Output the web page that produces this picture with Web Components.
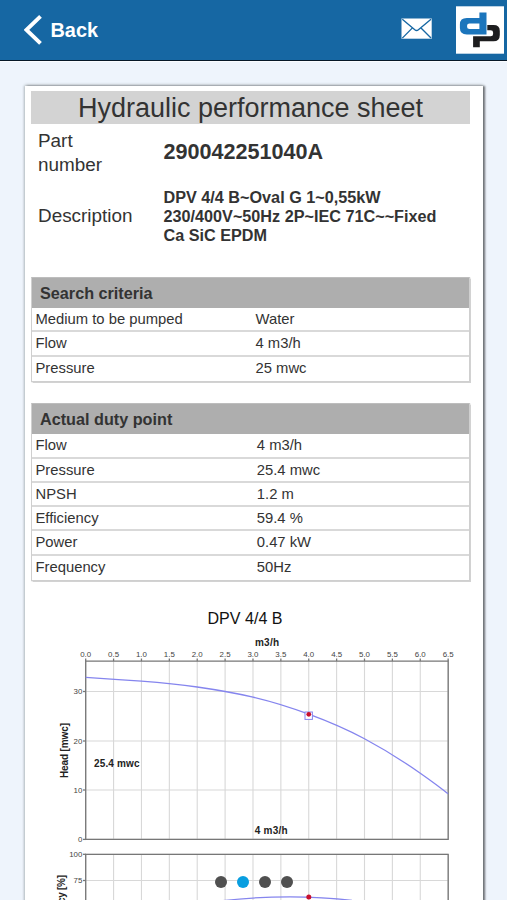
<!DOCTYPE html>
<html lang="en">
<head>
<meta charset="utf-8">
<title>Hydraulic performance sheet</title>
<style>
    html, body { margin: 0; height: 100%; overflow: hidden; }
    body { background: #eef4fc; color: #333; font-family: "Liberation Sans", Arial, sans-serif; }
</style>
</head>
<body>
<app-screen>
    <nav-bar slot="bar">Back</nav-bar>
    <pump-sheet>
        <span slot="title">Hydraulic performance sheet</span>
        <info-row label="Part number" size="21.6px" tall="59px" lift="3px">290042251040A</info-row>
        <info-row label="Description" size="16.22px" tall="67px" lift="0">DPV 4/4 B~Oval G 1~0,55kW<br>230/400V~50Hz 2P~IEC 71C~~Fixed<br>Ca SiC EPDM</info-row>
        <data-table caption="Search criteria" style="--value-col: 220px; margin-top: 27.5px">
            <data-row label="Medium to be pumped">Water</data-row>
            <data-row label="Flow">4 m3/h</data-row>
            <data-row label="Pressure">25 mwc</data-row>
        </data-table>
        <data-table caption="Actual duty point" style="--value-col: 221.3px; margin-top: 21.5px">
            <data-row label="Flow">4 m3/h</data-row>
            <data-row label="Pressure">25.4 mwc</data-row>
            <data-row label="NPSH">1.2 m</data-row>
            <data-row label="Efficiency">59.4 %</data-row>
            <data-row label="Power">0.47 kW</data-row>
            <data-row label="Frequency">50Hz</data-row>
        </data-table>
        <pump-chart></pump-chart>
    </pump-sheet>
    <page-dots slot="dots" count="4" active="1"></page-dots>
</app-screen>

<script>
    function attach(el, html){
        let template = document.createElement('template');
        template.innerHTML = html;
        el.attachShadow({mode: 'open'});
        el.shadowRoot.appendChild(template.content.cloneNode(true));
        return el.shadowRoot;
    }

    class AppScreen extends HTMLElement{
        constructor(){
            super();
            attach(this, `
            <style>
                :host { display: flex; flex-direction: column; height: 900px; overflow: hidden; position: relative; }
                main { flex: 1; min-height: 0; padding: 24px 24px 0 25px; border-top: 1px solid #fafcff; }
                .overlay { position: absolute; left: 1px; right: 0; bottom: 12px; display: flex; justify-content: center; }
            </style>
            <slot name="bar"></slot>
            <main><slot></slot></main>
            <div class="overlay"><slot name="dots"></slot></div>`);
        }
    }

    class NavBar extends HTMLElement{
        constructor(){
            super();
            attach(this, `
            <style>
                :host { display: flex; align-items: center; flex: none; box-sizing: border-box; height: 61px;
                        padding: 0 3.4px 0 24px; background: #1667a3; border-bottom: 1px solid #071827;
                        color: #fff; font-size: 19.9px; font-weight: bold; }
                svg { display: block; flex: none; }
                .back { margin: -1px 7.5px 0 0; }
                .label { flex: 1; }
                .mail { margin: -4px 24px 0 0; }
            </style>
            <svg class="back" width="19" height="32" viewBox="24 13 19 32"><path d="M40.5 15.3L26.5 28.9L40.5 42.4" fill="none" stroke="#fff" stroke-width="3.9"/></svg>
            <span class="label"><slot></slot></span>
            <svg class="mail" width="31" height="21" viewBox="401 17.5 31 21">
                <rect x="401.5" y="18" width="30.2" height="20.2" fill="#fff"/>
                <path d="M402.3 18.8L414.8 29.3Q416.6 30.8 418.4 29.3L431 18.8M402.3 37.6L412.2 27.6M431 37.6L421 27.6" fill="none" stroke="#1667a3" stroke-width="1.35"/>
            </svg>
            <svg width="48" height="48" viewBox="455.5 6.5 48 48">
                <rect x="455.5" y="6.8" width="48" height="47.4" fill="#fff"/>
                <path fill="#1d1d1f" fill-rule="evenodd" d="M486.8 25.6H493Q499.3 25.6 499.3 31.5V35.5Q499.3 41.8 493 41.8H479.3V47.7H472.6V36.8H490.2Q492.6 36.8 492.6 34.4V33Q492.6 30.7 490.2 30.7H486.8Z"/>
                <path fill="#1b75bc" fill-rule="evenodd" d="M478.9 13.1H486V34.9H466.3Q459.4 34.9 459.4 28.6V25Q459.4 18.6 466.3 18.6H478.9ZM478.9 24H469Q466.6 24 466.6 26V27.6Q466.6 29.6 469 29.6H478.9Z"/>
            </svg>`);
        }
    }

    class PumpSheet extends HTMLElement{
        constructor(){
            super();
            attach(this, `
            <style>
                :host { display: block; box-sizing: border-box; height: 860px; padding: 4.5px 13px 0 6px; background: #fff;
                        box-shadow: 2px 0 2px 0 #6e7276, 0 -1px 3px 0 #b4babd, -1px 0 2px #c4cbd2; }
                h1 { margin: 0; height: 33px; line-height: 34px; background: #d3d3d3; text-align: center;
                     font-size: 27px; font-weight: normal; white-space: nowrap; }
            </style>
            <h1><slot name="title"></slot></h1>
            <slot></slot>`);
        }
    }

    class InfoRow extends HTMLElement{
        constructor(){
            super();
            let root = attach(this, `
            <style>
                :host { display: grid; grid-template-columns: 95px 1fr; column-gap: 30.5px; align-items: center; padding-left: 7px; }
                .label { font-size: 18.9px; line-height: 24.4px; }
                .value { font-weight: bold; line-height: 19px; white-space: nowrap; }
            </style>
            <div class="label"></div><div class="value"><slot></slot></div>`);
            let value = root.querySelector('.value');
            value.style.fontSize = this.getAttribute('size');
            value.style.paddingBottom = this.getAttribute('lift');
            root.querySelector('.label').textContent = this.getAttribute('label');
            root.querySelector('.label').style.width = this.getAttribute('label') == 'Part number' ? '70px' : 'auto';
            this.style.height = this.getAttribute('tall');
        }
    }

    class DataTable extends HTMLElement{
        constructor(){
            super();
            let root = attach(this, `
            <style>
                :host { display: block; border: 1px solid #cfcfcf; border-top-color: #bdbdbd; box-shadow: 0 0 1px 0.5px #d2d2d2; }
                .caption { height: 30px; line-height: 30px; padding-left: 8px; background: #aeaeae; font-size: 16.2px; font-weight: bold; }
            </style>
            <div class="caption"></div><slot></slot>`);
            root.querySelector('.caption').textContent = this.getAttribute('caption');
        }
    }

    class DataRow extends HTMLElement{
        constructor(){
            super();
            let root = attach(this, `
            <style>
                :host { display: grid; grid-template-columns: var(--value-col) 1fr; box-sizing: border-box; height: 24.25px;
                        padding-left: 3.5px; line-height: 22.5px; font-size: 14.8px; border-bottom: 2px solid #d9d9d9; }
                :host(:last-of-type) { border-bottom: 0; }
            </style>
            <span class="label"></span><span><slot></slot></span>`);
            root.querySelector('.label').textContent = this.getAttribute('label');
        }
    }

    class PumpChart extends HTMLElement{
        constructor(){
            super();
            // the drawing uses sheet coordinates, from y 582 down
            let grid = '', labels = '';
            for(let i = 0; i <= 13; i++){
                let x = 85.7 + i * 27.88;
                grid += `<path class="grid" d="M${x} 661V839M${x} 854V910"/><path class="axis" d="M${x} 658.5V661"/>`;
                labels += `<text class="tick" x="${x}" y="657" text-anchor="middle">${(i / 2).toFixed(1)}</text>`;
            }
            [[30, 691.5], [20, 741], [10, 790], [0, 839.4], [100, 854.3], [75, 880.5]].forEach(([value, y]) => {
                grid += `<path class="grid" d="M86 ${y}H448"/><path class="axis" d="M83 ${y}H86"/>`;
                labels += `<text class="tick" x="82.3" y="${y + 2.9}" text-anchor="end">${value}</text>`;
            });
            attach(this, `
            <style>
                :host { display: block; margin: 1px 0 0 -6px; }
                svg { display: block; overflow: visible; }
                text { fill: #222; font-family: "Liberation Sans", Arial, sans-serif; }
                .grid { stroke: #d8d8d8; stroke-width: 1.1; }
                .axis { stroke: #777; stroke-width: 1.3; fill: none; }
                .curve { stroke: #8585ee; stroke-width: 1.3; fill: none; }
                .tick { font-size: 7.9px; fill: #444; }
                .note { font-size: 10px; font-weight: bold; }
            </style>
            <svg width="458" height="318" viewBox="25 582 458 318">
                ${grid}
                <path class="axis" d="M85.7 661.2H448.2V839.4H85.7ZM85.7 910V854.3H448.2V910"/>
                ${labels}
                <path class="curve" d="M85.7 677.4C104 678.8 123 679.8 141.5 681.2C160 682.6 179 684.4 197.2 687C216 689.7 235 693 253 697.1C272 701.6 291 707.5 308.7 714.2C328 721.3 347 729.5 364.5 738.8C384 749.2 402 760.4 420.3 773.2C430 780 439 786.5 448 793.7"/>
                <path class="curve" d="M220 901C235 899.2 265 896.8 290 896.8S335 898.3 352 900.5"/>
                <rect x="305" y="712" width="7.4" height="7.4" fill="#fff" stroke="#8585ee"/>
                <circle cx="308.8" cy="714.3" r="2.4" fill="#c8102e"/>
                <circle cx="308.8" cy="897" r="2.5" fill="#c8102e"/>
                <text x="245" y="624.2" text-anchor="middle" font-size="16" textLength="75" lengthAdjust="spacingAndGlyphs" style="fill:#111">DPV 4/4 B</text>
                <text class="note" x="267" y="645.5" text-anchor="middle" textLength="24">m3/h</text>
                <text class="note" x="94" y="766.7" textLength="45.5">25.4 mwc</text>
                <text class="note" x="254.7" y="833.8" textLength="33">4 m3/h</text>
                <text class="note" transform="translate(68.3 778) rotate(-90)" textLength="55">Head [mwc]</text>
                <text class="note" transform="translate(65 937) rotate(-90)" textLength="62">Efficiency [%]</text>
            </svg>`);
        }
    }

    class PageDots extends HTMLElement{
        constructor(){
            super();
            let dots = '';
            for(let i = 0; i < this.getAttribute('count'); i++){
                dots += `<i class="${i == this.getAttribute('active') ? 'on' : ''}"></i>`;
            }
            attach(this, `
            <style>
                :host { display: flex; gap: 9.7px; }
                i { width: 12.4px; height: 12.4px; border-radius: 50%; background: #505050; }
                .on { background: #089ee0; }
            </style>${dots}`);
        }
    }

    window.customElements.define('app-screen', AppScreen);
    window.customElements.define('nav-bar', NavBar);
    window.customElements.define('pump-sheet', PumpSheet);
    window.customElements.define('info-row', InfoRow);
    window.customElements.define('data-table', DataTable);
    window.customElements.define('data-row', DataRow);
    window.customElements.define('pump-chart', PumpChart);
    window.customElements.define('page-dots', PageDots);
</script>
</body>
</html>
